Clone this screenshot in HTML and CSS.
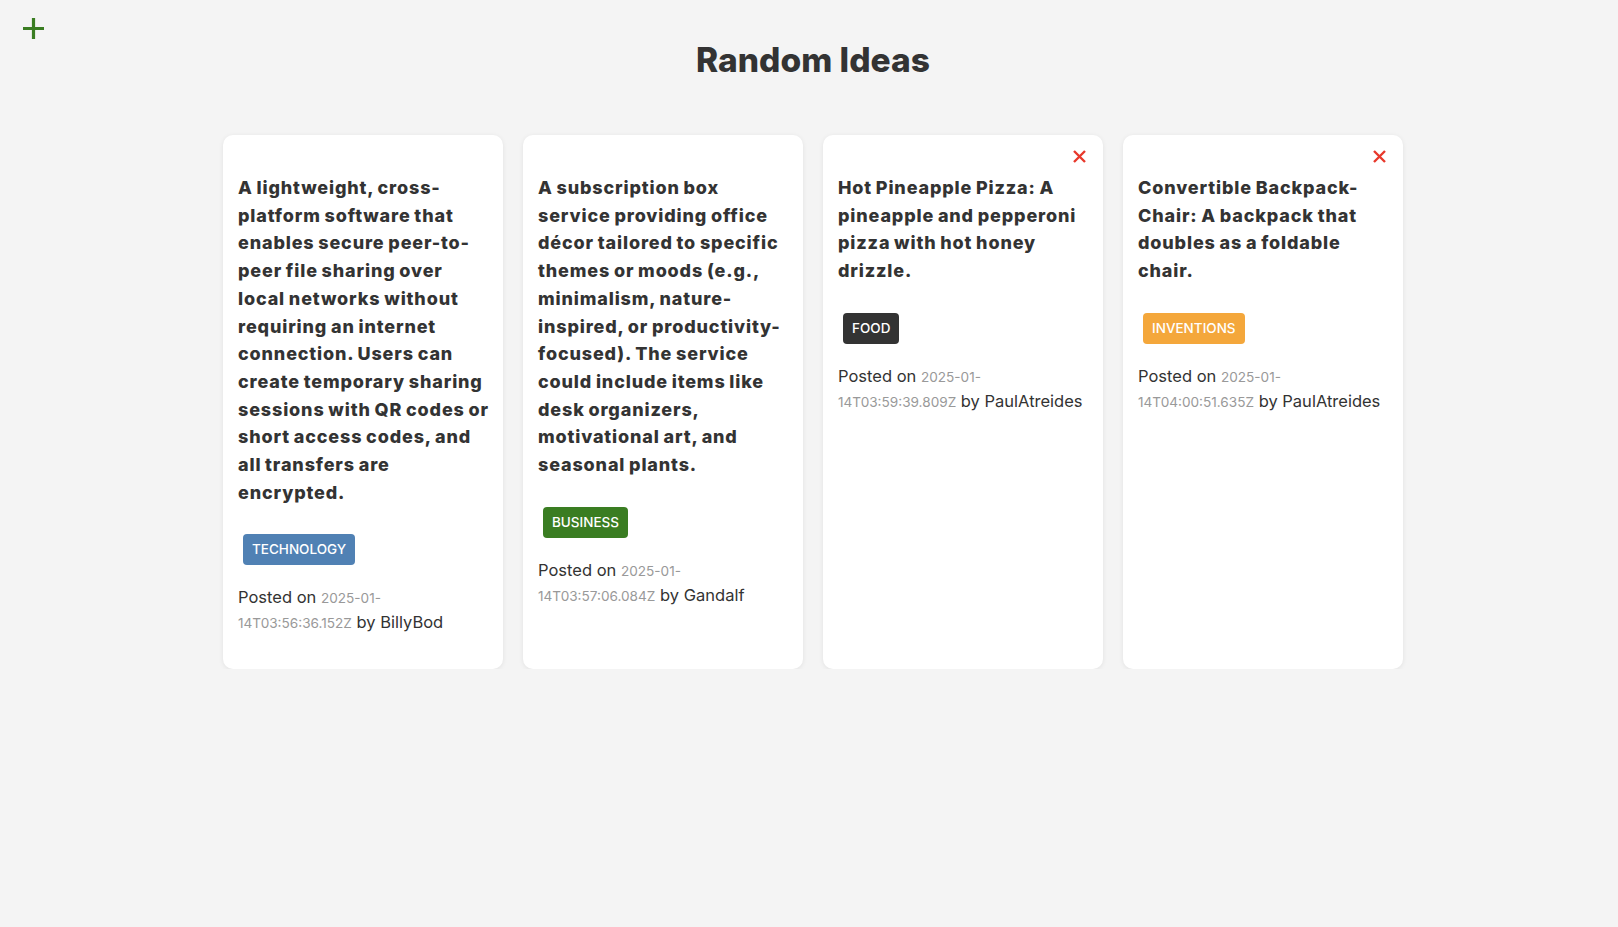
FILE: index.html
```html
<!DOCTYPE html>
<html lang="en">
<head>
<meta charset="utf-8">
<title>Random Ideas</title>
<link rel="stylesheet" href="styles.css">
</head>
<body>
<header class="topbar">
  <button class="add-btn" aria-label="Add idea">
    <svg width="21" height="21" viewBox="0 0 21 21"><path d="M10.5 0V21M0 10.5H21" stroke="#3a7d22" stroke-width="3.2" fill="none"/></svg>
  </button>
  <h1 class="page-title">Random Ideas</h1>
</header>
<main class="ideas">
  <article class="card">
    <h3 class="card-title">A lightweight, cross-<br>platform software that<br>enables secure peer-to-<br>peer file sharing over<br>local networks without<br>requiring an internet<br>connection. Users can<br>create temporary sharing<br>sessions with QR codes or<br>short access codes, and<br>all transfers are<br>encrypted.</h3>
    <div class="tag-row"><span class="tag tag-technology">TECHNOLOGY</span></div>
    <p class="meta">Posted on <span class="date">2025-01-14T03:56:36.152Z</span> by BillyBod</p>
  </article>
  <article class="card">
    <h3 class="card-title">A subscription box<br>service providing office<br>décor tailored to specific<br>themes or moods (e.g.,<br>minimalism, nature-<br>inspired, or productivity-<br>focused). The service<br>could include items like<br>desk organizers,<br>motivational art, and<br>seasonal plants.</h3>
    <div class="tag-row"><span class="tag tag-business">BUSINESS</span></div>
    <p class="meta">Posted on <span class="date">2025-01-14T03:57:06.084Z</span> by Gandalf</p>
  </article>
  <article class="card">
    <button class="delete-btn" aria-label="Delete"><svg width="13" height="13" viewBox="0 0 13 13"><path d="M1 1L12 12M12 1L1 12" stroke="#e8392c" stroke-width="2.4" fill="none"/></svg></button>
    <h3 class="card-title">Hot Pineapple Pizza: A<br>pineapple and pepperoni<br>pizza with hot honey<br>drizzle.</h3>
    <div class="tag-row"><span class="tag tag-food">FOOD</span></div>
    <p class="meta">Posted on <span class="date">2025-01-14T03:59:39.809Z</span> by PaulAtreides</p>
  </article>
  <article class="card">
    <button class="delete-btn" aria-label="Delete"><svg width="13" height="13" viewBox="0 0 13 13"><path d="M1 1L12 12M12 1L1 12" stroke="#e8392c" stroke-width="2.4" fill="none"/></svg></button>
    <h3 class="card-title">Convertible Backpack-<br>Chair: A backpack that<br>doubles as a foldable<br>chair.</h3>
    <div class="tag-row"><span class="tag tag-inventions">INVENTIONS</span></div>
    <p class="meta">Posted on <span class="date">2025-01-14T04:00:51.635Z</span> by PaulAtreides</p>
  </article>
</main>
</body>
</html>
```
FILE: styles.css
```css
* { box-sizing: border-box; }

body {
  margin: 0;
  background: #f4f4f4;
  color: #333;
  font-family: Inter, "Open Sans", sans-serif;
}

.topbar {
  padding: 18px 0 0 23px;
}

.add-btn {
  display: block;
  width: 21px;
  height: 21px;
  padding: 0;
  border: 0;
  background: none;
  cursor: pointer;
}

.add-btn svg { display: block; }

.page-title {
  margin: 2px 0 0 -23px;
  padding-left: 8px;
  text-align: center;
  font-size: 33.5px;
  font-weight: 800;
  line-height: 38px;
  color: #333;
}

.ideas {
  display: grid;
  grid-template-columns: repeat(4, 280px);
  gap: 20px;
  justify-content: center;
  padding-left: 8px;
  margin-top: 56px;
}

.card {
  position: relative;
  background: #fff;
  border-radius: 10px;
  box-shadow: 0 1px 5px rgba(0, 0, 0, 0.08);
  padding: 39px 2px 34px 15px;
}

.delete-btn {
  position: absolute;
  top: 15px;
  right: 17px;
  width: 13px;
  height: 13px;
  padding: 0;
  border: 0;
  background: none;
  cursor: pointer;
}

.delete-btn svg { display: block; }

.card-title {
  margin: 0;
  font-size: 18px;
  line-height: 27.7px;
  font-weight: 800;
  letter-spacing: 0.85px;
  word-spacing: -1px;
  color: #333;
}

.tag-row {
  margin: 28px 0 0 5px;
}

.tag {
  display: inline-block;
  height: 31px;
  line-height: 31px;
  padding: 0 9px;
  border-radius: 4px;
  font-size: 13.5px;
  font-weight: 500;
  color: #fff;
}

.tag-technology { background: #5081b4; }
.tag-business { background: #3a7d22; }
.tag-food { background: #333; }
.tag-inventions { background: #f4a73b; }

.meta {
  margin: 20px 13px 0 0;
  font-size: 16.5px;
  line-height: 24px;
  color: #333;
}

.date {
  font-size: 13.6px;
  color: #999;
}
```
